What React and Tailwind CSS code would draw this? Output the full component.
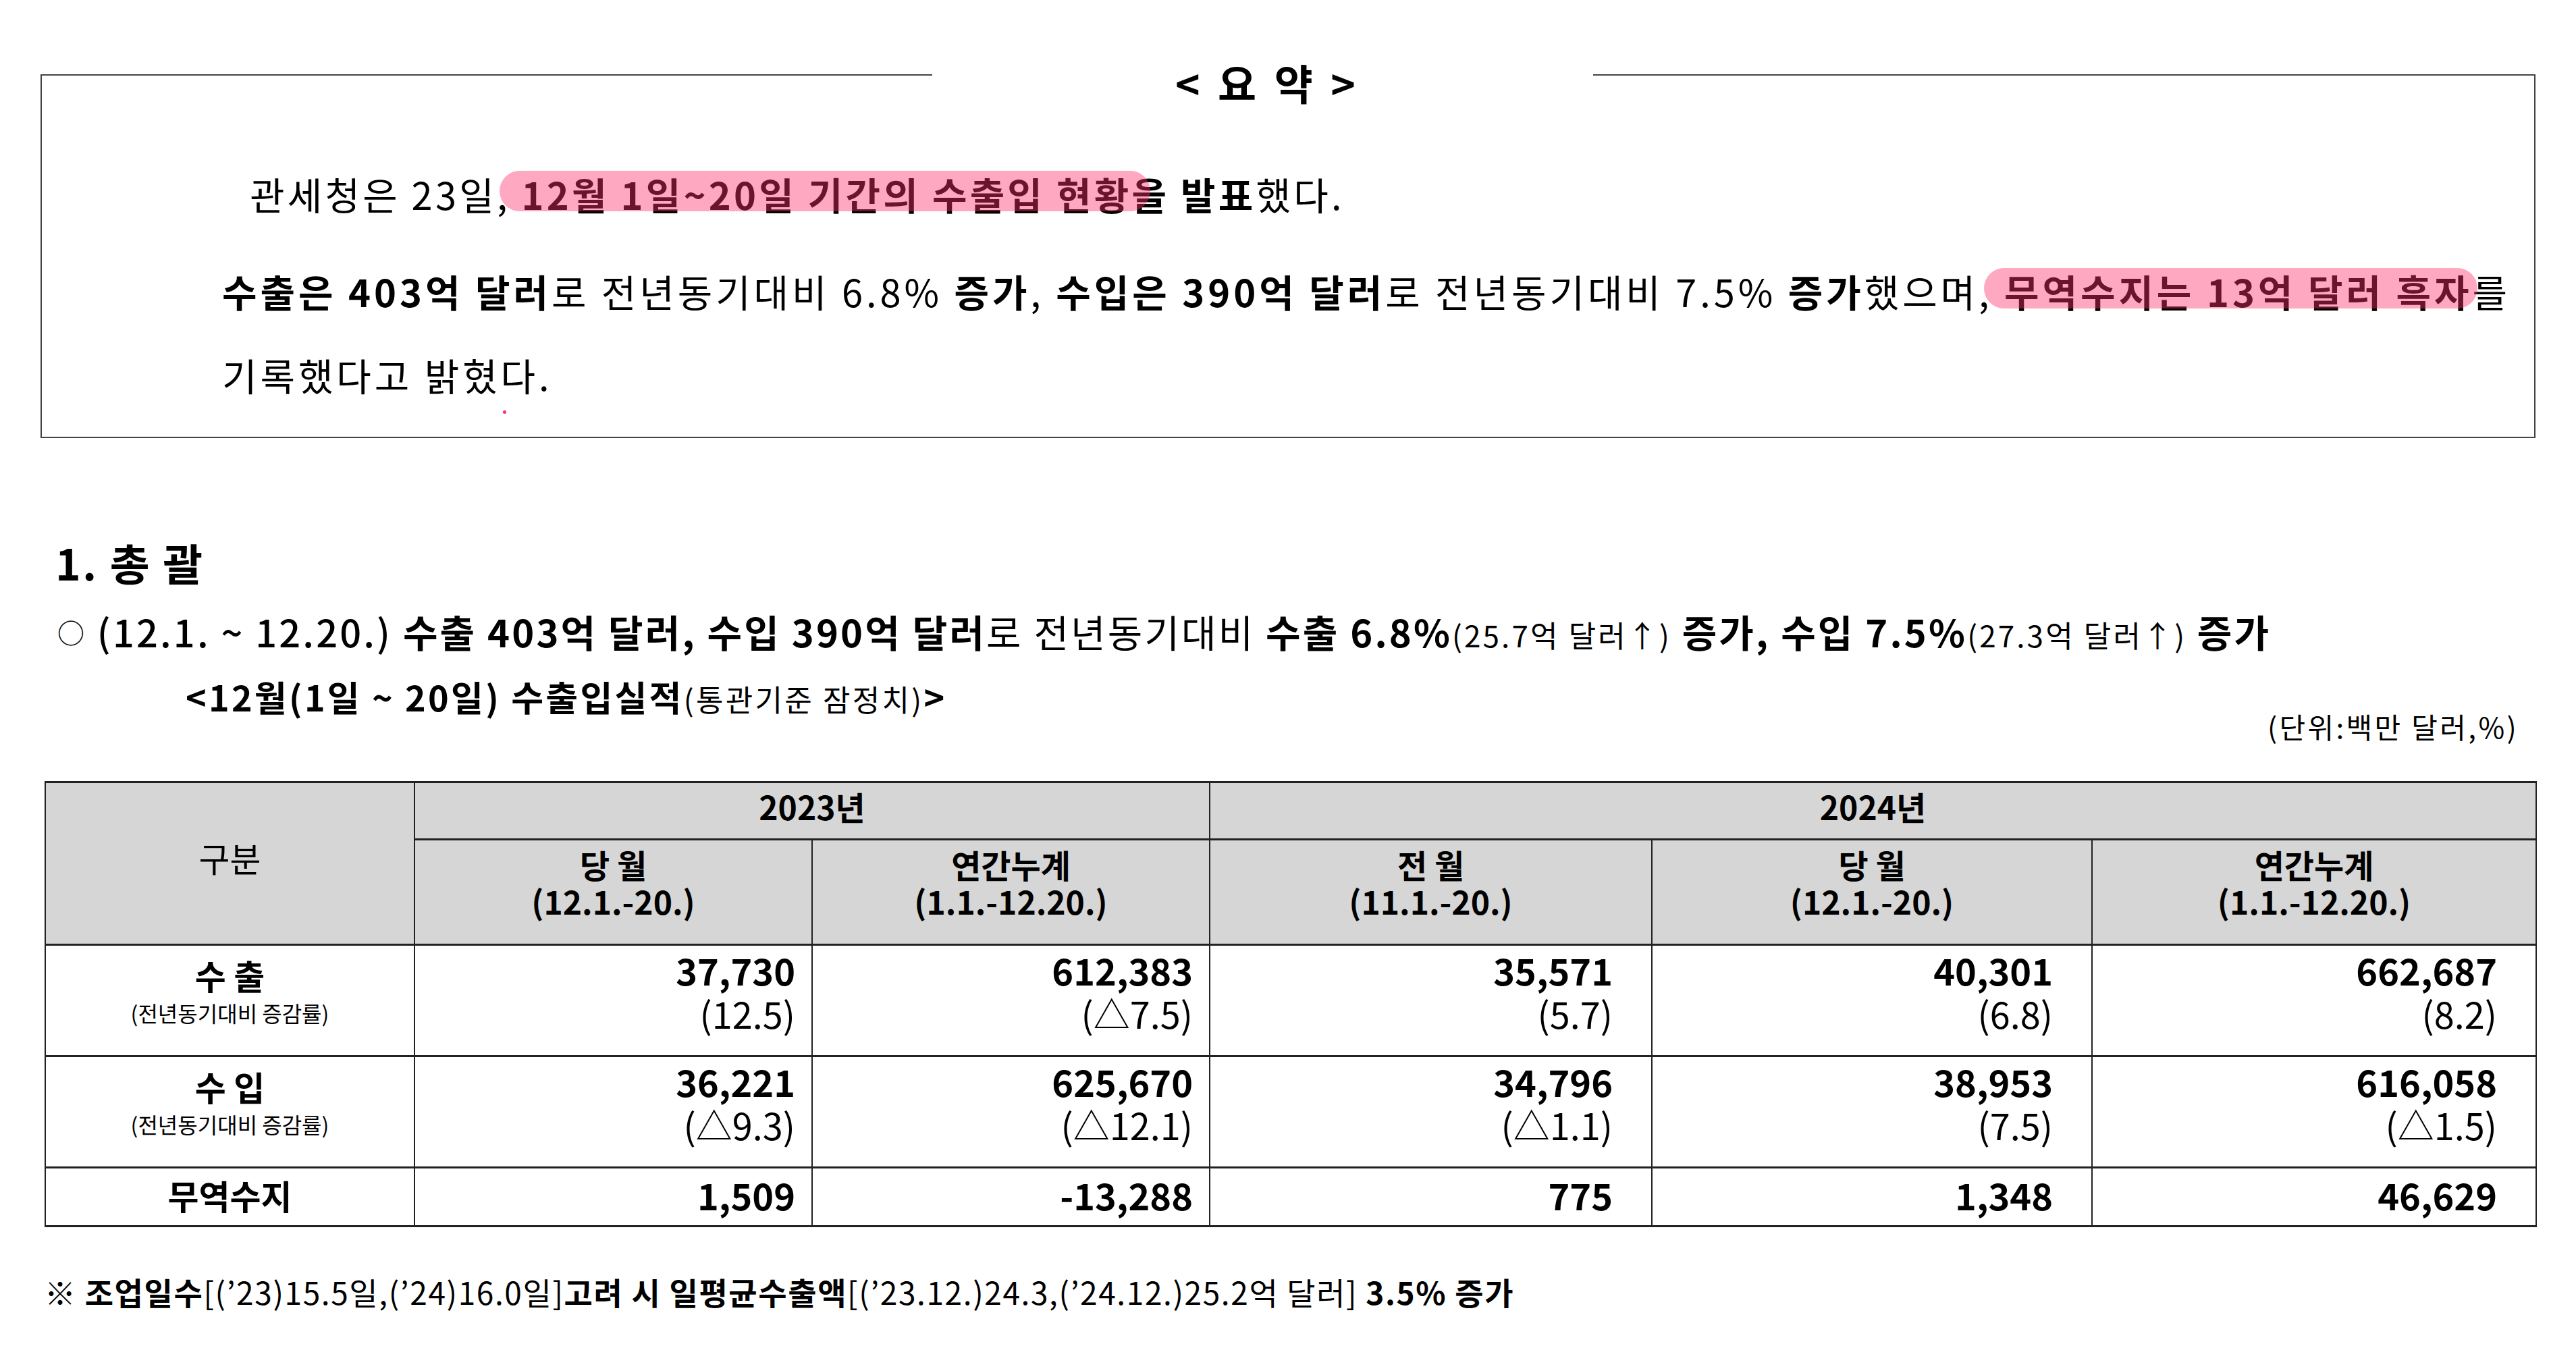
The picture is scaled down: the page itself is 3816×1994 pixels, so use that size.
import React from "react";

const rows = [
  {
    label: "수 출",
    sub: "(전년동기대비 증감률)",
    cells: [
      ["37,730", "(12.5)"],
      ["612,383", "(△7.5)"],
      ["35,571", "(5.7)"],
      ["40,301", "(6.8)"],
      ["662,687", "(8.2)"],
    ],
  },
  {
    label: "수 입",
    sub: "(전년동기대비 증감률)",
    cells: [
      ["36,221", "(△9.3)"],
      ["625,670", "(△12.1)"],
      ["34,796", "(△1.1)"],
      ["38,953", "(7.5)"],
      ["616,058", "(△1.5)"],
    ],
  },
];

const balance = ["1,509", "-13,288", "775", "1,348", "46,629"];

const padCls = ["pr-[24px]", "pr-[24px]", "pr-[57px]", "pr-[57px]", "pr-[57px]"];

export default function App() {
  return (
    <div className="min-h-screen bg-white text-black font-['Noto_Sans_CJK_KR','Noto_Sans',sans-serif] pt-[87px] px-[60px]">
      {/* 요약 box */}
      <div>
        <div className="flex">
          <div className="w-[1321px] mt-[23px] border-t-2 border-l-2 border-[#444]"></div>
          <div className="w-[979px] pl-[14px] text-center text-[62px] leading-[70px] font-bold tracking-[0.1em]">
            &lt; 요 약 &gt;
          </div>
          <div className="flex-1 mt-[23px] border-t-2 border-r-2 border-[#444]"></div>
        </div>
        <div className="relative border-x-2 border-b-2 border-[#444] pl-[267px] pt-[94px] pb-[30px] text-[56px] tracking-[0.075em] whitespace-nowrap">
          <p className="pl-[41px] leading-[72px]">
            관세청은 23일,{" "}
            <span className="relative inline-block font-bold">
              12월 1일~20일 기간의 수출입 현황
              <span className="absolute -left-[32px] -right-[28px] top-[2px] bottom-[10px] rounded-full bg-[rgba(255,48,110,0.42)]"></span>
            </span>
            <b>을 발표</b>했다.
          </p>
          <p className="mt-[46px] leading-[124px] tracking-[0.088em]">
            <b>수출은 403억 달러</b>로 전년동기대비 6.8% <b>증가</b>, <b>수입은 390억 달러</b>로 전년동기대비 7.5%{" "}
            <b>증가</b>했으며,{" "}
            <span className="relative inline-block font-bold">
              무역수지는 13억 달러 흑자
              <span className="absolute -left-[30px] -right-[8px] top-[28px] bottom-[36px] rounded-full bg-[rgba(255,48,110,0.42)]"></span>
            </span>
            를
            <br />
            기록했다고 밝혔다.
          </p>
          <span className="absolute left-[683px] top-[451px] w-[5px] h-[5px] rounded-full bg-[#ff2f6e]"></span>
        </div>
      </div>

      {/* 1. 총괄 */}
      <h2 className="mt-[143px] pl-[22px] text-[64px] leading-[80px] font-bold tracking-[0.04em]">1. 총 괄</h2>
      <p className="mt-[23px] pl-[25px] text-[56px] leading-[80px] tracking-[0.056em] whitespace-nowrap">
        <span className="text-[40px] align-[6px]">○</span>{" "}
        <span className="font-medium">(12.1. ~ 12.20.)</span> <b>수출 403억 달러, 수입 390억 달러</b>로 전년동기대비{" "}
        <b>수출 6.8%</b>
        <span className="text-[44px]">(25.7억 달러↑)</span> <b>증가, 수입 7.5%</b>
        <span className="text-[44px]">(27.3억 달러↑)</span> <b>증가</b>
      </p>
      <div className="mt-[17px] flex justify-between items-start pr-[25px]">
        <p className="pl-[215px] text-[52px] leading-[70px] font-bold tracking-[0.063em] whitespace-nowrap">
          &lt;12월(1일 ~ 20일) 수출입실적<span className="font-normal text-[44px]">(통관기준 잠정치)</span>&gt;
        </p>
        <p className="mt-[54px] text-[42px] leading-[50px] tracking-[0.08em]">(단위:백만 달러,%)</p>
      </div>

      {/* table */}
      <table className="mt-[56px] ml-[6px] w-[3690px] table-fixed border-collapse">
        <colgroup>
          <col className="w-[547px]" />
          <col className="w-[589px]" />
          <col className="w-[589px]" />
          <col className="w-[655px]" />
          <col className="w-[652px]" />
          <col className="w-[658px]" />
        </colgroup>
        <tbody>
          <tr className="h-[85px]">
            <td rowSpan={2} className="border-x-2 border-y-[3px] border-[#222] bg-[#d6d6d6] text-center text-[50px] leading-[60px] pb-[18px]">
              구분
            </td>
            <td colSpan={2} className="border-x-2 border-y-[3px] border-[#222] bg-[#d6d6d6] text-center text-[48px] leading-[60px] font-bold pb-[14px]">
              2023년
            </td>
            <td colSpan={3} className="border-x-2 border-y-[3px] border-[#222] bg-[#d6d6d6] text-center text-[48px] leading-[60px] font-bold pb-[14px]">
              2024년
            </td>
          </tr>
          <tr className="h-[156px]">
            {[
              ["당 월", "(12.1.-20.)"],
              ["연간누계", "(1.1.-12.20.)"],
              ["전 월", "(11.1.-20.)"],
              ["당 월", "(12.1.-20.)"],
              ["연간누계", "(1.1.-12.20.)"],
            ].map(([a, b], i) => (
              <td key={i} className="border-x-2 border-y-[3px] border-[#222] bg-[#d6d6d6] text-center text-[48px] leading-[54px] font-bold pb-[30px]">
                <div>{a}</div>
                <div>{b}</div>
              </td>
            ))}
          </tr>
          {rows.map((r) => (
            <tr key={r.label} className="h-[165px]">
              <td className="border-x-2 border-y-[3px] border-[#222] text-center pb-[24px]">
                <div className="text-[50px] leading-[60px] font-bold">{r.label}</div>
                <div className="text-[32px] leading-[52px]">{r.sub}</div>
              </td>
              {r.cells.map(([n, p], i) => (
                <td key={i} className={`border-x-2 border-y-[3px] border-[#222] text-right text-[54px] leading-[64px] pb-[26px] ${padCls[i]}`}>
                  <div className="font-bold">{n}</div>
                  <div>{p}</div>
                </td>
              ))}
            </tr>
          ))}
          <tr className="h-[87px]">
            <td className="border-x-2 border-y-[3px] border-[#222] text-center text-[50px] leading-[70px] font-bold pb-[6px]">무역수지</td>
            {balance.map((v, i) => (
              <td key={i} className={`border-x-2 border-y-[3px] border-[#222] text-right text-[54px] leading-[70px] font-bold pb-[6px] ${padCls[i]}`}>
                {v}
              </td>
            ))}
          </tr>
        </tbody>
      </table>

      {/* footnote */}
      <p className="mt-[65px] ml-[6px] text-[46px] leading-[60px] tracking-[0.035em] whitespace-nowrap">
        <b>※ 조업일수</b>[(’23)15.5일,(’24)16.0일]<b>고려 시 일평균수출액</b>[(’23.12.)24.3,(’24.12.)25.2억 달러] <b>3.5% 증가</b>
      </p>
    </div>
  );
}
